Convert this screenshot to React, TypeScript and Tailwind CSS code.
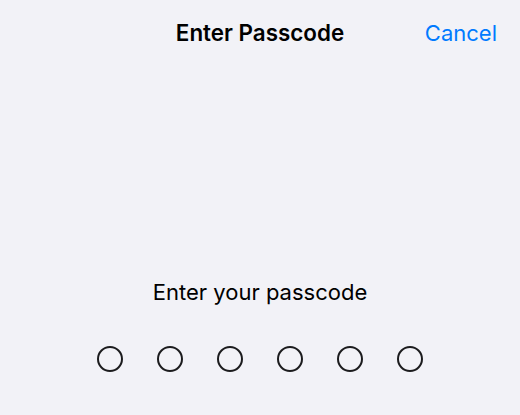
export default function App() {
  return (
    <div
      className="w-[520px] h-[415px] bg-[#f2f2f7] flex flex-col overflow-hidden"
      style={{ fontFamily: 'Inter, "Liberation Sans", sans-serif' }}
    >
      <div className="h-[66px] grid grid-cols-[1fr_auto_1fr] items-center">
        <div />
        <div className="text-[22.4px] font-semibold text-black">Enter Passcode</div>
        <div className="flex justify-end pr-[23px]">
          <span className="text-[22px] text-[#007aff]">Cancel</span>
        </div>
      </div>
      <div className="mt-[212px] flex flex-col items-center">
        <div className="h-[28px] leading-[28px] text-[22px] text-black">Enter your passcode</div>
        <div className="mt-[40px] flex gap-[34px]">
          {[0, 1, 2, 3, 4, 5].map((i) => (
            <div key={i} className="w-[26px] h-[26px] rounded-full border-2 border-[#1c1c1e]" />
          ))}
        </div>
      </div>
    </div>
  );
}
